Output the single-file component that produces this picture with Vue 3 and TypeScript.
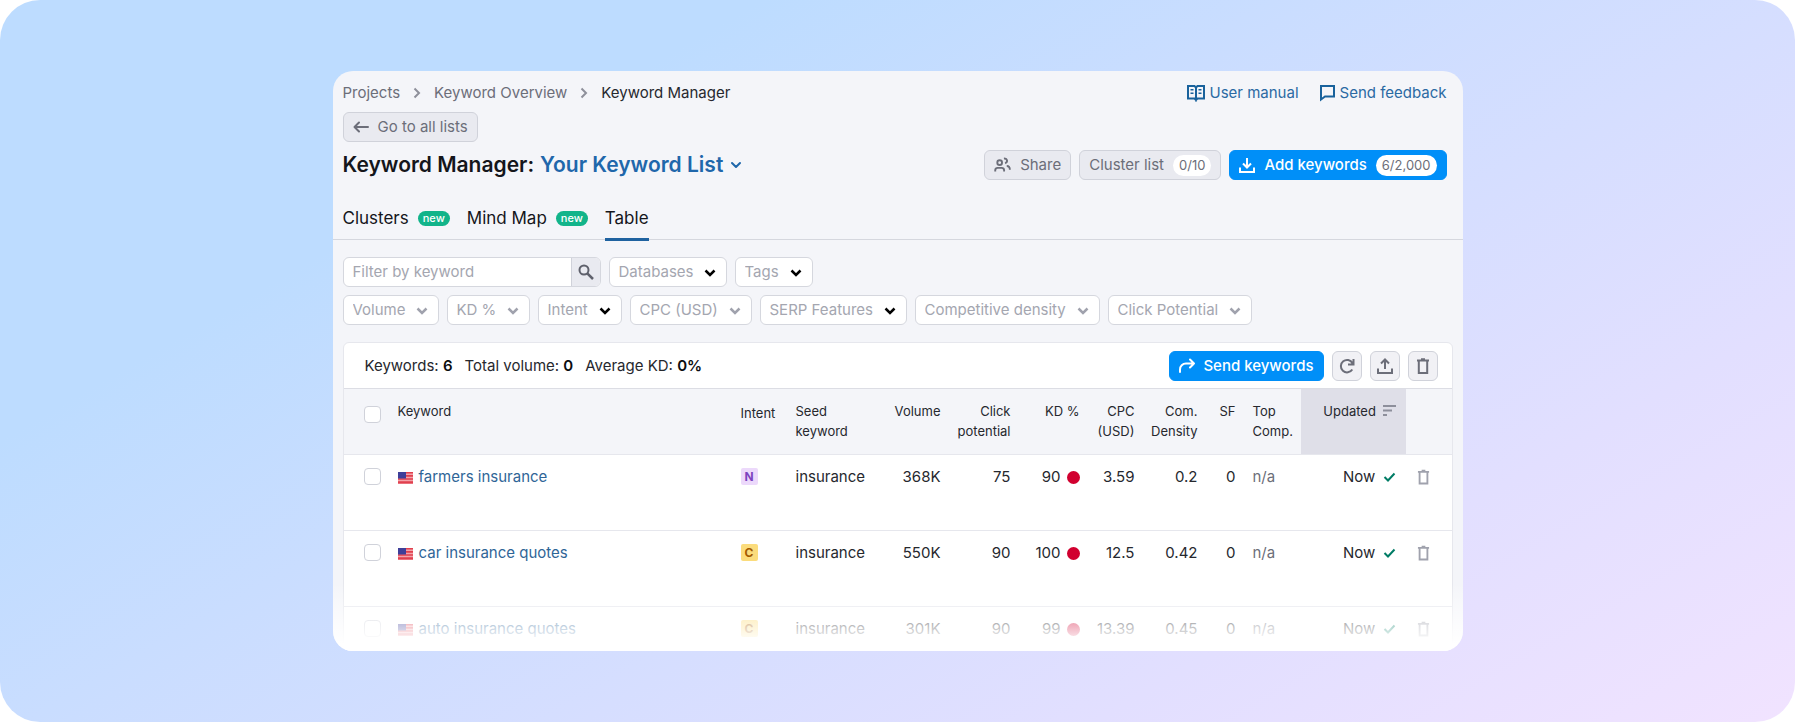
<script setup lang="ts">
interface Filter { label: string; strong: boolean }
interface Row {
  keyword: string; intent: 'N' | 'C'; seed: string; volume: string; click: string
  kd: string; cpc: string; density: string; sf: string; comp: string
}

const primaryFilters: Filter[] = [
  { label: 'Databases', strong: true },
  { label: 'Tags', strong: true },
]
const metricFilters: Filter[] = [
  { label: 'Volume', strong: false },
  { label: 'KD %', strong: false },
  { label: 'Intent', strong: true },
  { label: 'CPC (USD)', strong: false },
  { label: 'SERP Features', strong: true },
  { label: 'Competitive density', strong: false },
  { label: 'Click Potential', strong: false },
]
const rows: Row[] = [
  { keyword: 'farmers insurance', intent: 'N', seed: 'insurance', volume: '368K', click: '75', kd: '90', cpc: '3.59', density: '0.2', sf: '0', comp: 'n/a' },
  { keyword: 'car insurance quotes', intent: 'C', seed: 'insurance', volume: '550K', click: '90', kd: '100', cpc: '12.5', density: '0.42', sf: '0', comp: 'n/a' },
  { keyword: 'auto insurance quotes', intent: 'C', seed: 'insurance', volume: '301K', click: '90', kd: '99', cpc: '13.39', density: '0.45', sf: '0', comp: 'n/a' },
]
</script>

<template>
  <div class="stage">
    <main class="card">
      <div class="top">
        <nav class="crumbs" aria-label="Breadcrumb">
          <a href="#">Projects</a>
          <svg width="8" height="12" viewBox="0 0 8 12"><path d="M1.500 1.500 6 6l-4.500 4.500" /></svg>
          <a href="#">Keyword Overview</a>
          <svg width="8" height="12" viewBox="0 0 8 12"><path d="M1.500 1.500 6 6l-4.500 4.500" /></svg>
          <span class="current">Keyword Manager</span>
        </nav>
        <div class="help">
          <a href="#">
            <svg width="18" height="18" viewBox="0 0 18 18" fill="none" stroke="currentColor" stroke-width="2">
              <path d="M1 2h6.500L9 3.500 10.500 2H17v12.500h-6.500L9 16l-1.500-1.500H1zM9 3.500V17.500" />
              <path d="M3.500 5.800h3M3.500 9.300h3M11.500 5.800h3M11.500 9.300h3" stroke-width="1.500" />
            </svg>
            User manual
          </a>
          <a href="#">
            <svg width="17" height="18" viewBox="0 0 17 18" fill="none" stroke="currentColor" stroke-width="2">
              <path d="M2 2h13v10.500H6L2 15.500z" />
            </svg>
            Send feedback
          </a>
        </div>
      </div>

      <button class="btn back" type="button">
        <svg width="16" height="14" viewBox="0 0 16 14" fill="none" stroke="currentColor" stroke-width="2" stroke-linecap="round" stroke-linejoin="round">
          <path d="M15 7H1.500M6 2.500 1.500 7 6 11.500" />
        </svg>
        Go to all lists
      </button>

      <header class="head">
        <h1>
          Keyword Manager:
          <button class="list-name" type="button">
            Your Keyword List
            <svg width="12" height="8" viewBox="0 0 12 8" fill="none" stroke="currentColor" stroke-width="2" stroke-linecap="round" stroke-linejoin="round"><path d="M2 2l4 4 4-4" /></svg>
          </button>
        </h1>
        <div class="actions">
          <button class="btn" type="button">
            <svg width="17" height="16" viewBox="0 0 18 16" fill="none" stroke="currentColor" stroke-width="2">
              <circle cx="6" cy="5.500" r="2.500" />
              <path d="M1.300 15v-1.500a2.500 2.500 0 0 1 2.500-2.500h4.400a2.500 2.500 0 0 1 2.500 2.500V15M10.500 1.200c3.800-.4 4.500 3.600 1.300 5M13.500 9c2.500 0 3.300 1.200 3.300 4" />
            </svg>
            Share
          </button>
          <button class="btn" type="button">Cluster list <span class="count">0/10</span></button>
          <button class="btn primary" type="button">
            <svg width="16" height="16" viewBox="0 0 16 16" fill="none" stroke="currentColor" stroke-width="2">
              <path d="M8 1v9M4 6.500l4 4 4-4M1 10.500V15h14v-4.500" />
            </svg>
            Add keywords <span class="count">6/2,000</span>
          </button>
        </div>
      </header>

      <nav class="tabs" aria-label="Views">
        <a href="#">Clusters <span class="new">new</span></a>
        <a href="#">Mind Map <span class="new">new</span></a>
        <a href="#" class="active" aria-current="page">Table</a>
      </nav>

      <section class="filters" aria-label="Filters">
        <div class="line">
          <form class="search" @submit.prevent>
            <input type="text" placeholder="Filter by keyword" aria-label="Filter by keyword">
            <button type="submit" aria-label="Search">
              <svg width="16" height="16" viewBox="0 0 16 16" fill="none" stroke="currentColor" stroke-width="2">
                <circle cx="6" cy="6" r="4.500" /><path d="M9.300 9.300l5.700 5.700" stroke-width="2.500" />
              </svg>
            </button>
          </form>
          <div v-for="f in primaryFilters" :key="f.label" class="pick" :class="{ strong: f.strong }">
            <select :aria-label="f.label"><option>{{ f.label }}</option></select>
            <svg width="12" height="9" viewBox="0 0 12 9"><path d="M1.500 1.500 6 6l4.500-4.500" /></svg>
          </div>
        </div>
        <div class="line">
          <div v-for="f in metricFilters" :key="f.label" class="pick" :class="{ strong: f.strong }">
            <select :aria-label="f.label"><option>{{ f.label }}</option></select>
            <svg width="12" height="9" viewBox="0 0 12 9"><path d="M1.500 1.500 6 6l4.500-4.500" /></svg>
          </div>
        </div>
      </section>

      <section class="panel">
        <div class="summary">
          <div class="totals">
            <span>Keywords: <b>6</b></span>
            <span>Total volume: <b>0</b></span>
            <span>Average KD: <b>0%</b></span>
          </div>
          <div class="actions">
            <button class="btn primary send" type="button">
              <svg width="16" height="16" viewBox="0 0 16 16" fill="none" stroke="currentColor" stroke-width="2" stroke-linecap="round" stroke-linejoin="round">
                <path d="M1 14v-2.500a6 6 0 0 1 6-6h8M11 1.500l4 4-4 4" />
              </svg>
              Send keywords
            </button>
            <button class="btn icon" type="button" aria-label="Refresh">
              <svg width="16" height="16" viewBox="0 0 16 16" fill="none" stroke="currentColor" stroke-width="2">
                <path d="M13.300 11.500A6.200 6.200 0 1 1 13.500 5.200M14.500 1v5.500H9" />
              </svg>
            </button>
            <button class="btn icon" type="button" aria-label="Export">
              <svg width="16" height="16" viewBox="0 0 16 16" fill="none" stroke="currentColor" stroke-width="2">
                <path d="M8 11V2M4 5.500l4-4 4 4M1 10.500V15h14v-4.500" />
              </svg>
            </button>
            <button class="btn icon" type="button" aria-label="Delete">
              <svg width="14" height="16" viewBox="0 0 14 16" fill="none" stroke="currentColor" stroke-width="2">
                <path d="M1 2.500h12M5 1.200h4M2.800 3v12h8.400V3" />
              </svg>
            </button>
          </div>
        </div>

        <table>
          <colgroup>
            <col class="w-check"><col><col class="w-intent"><col class="w-seed"><col class="w-volume">
            <col class="w-click"><col class="w-kd"><col class="w-cpc"><col class="w-density"><col class="w-sf">
            <col class="w-comp"><col class="w-updated"><col class="w-del">
          </colgroup>
          <thead>
            <tr>
              <th class="check"><input type="checkbox" aria-label="Select all keywords"></th>
              <th>Keyword</th>
              <th class="intent">Intent</th>
              <th>Seed<br>keyword</th>
              <th class="num">Volume</th>
              <th class="num">Click<br>potential</th>
              <th class="num">KD %</th>
              <th class="num">CPC<br>(USD)</th>
              <th class="num">Com.<br>Density</th>
              <th class="num">SF</th>
              <th class="comp">Top<br>Comp.</th>
              <th class="updated sorted" aria-sort="descending">
                Updated
                <svg width="13" height="11" viewBox="0 0 13 11" fill="none" stroke="#8d8f9b" stroke-width="2"><path d="M0 1h13M0 5.500h9M0 10h4" /></svg>
              </th>
              <th></th>
            </tr>
          </thead>
          <tbody>
            <tr v-for="r in rows" :key="r.keyword">
              <td class="check"><input type="checkbox" :aria-label="'Select ' + r.keyword"></td>
              <td>
                <a class="kw" href="#">
                  <svg width="15" height="12" viewBox="0 0 15 12">
                    <path fill="#f4a3aa" d="M0 0h15v12H0z" />
                    <path fill="#e0404e" d="M0 0h15v1.500H0zM0 3h15v1.700H0zM0 6.200h15v1.600H0zM0 9.300h15v1.700H0zM0 11.500h15v.5H0z" />
                    <path fill="#3f3f99" d="M0 0h8v6.500H0z" />
                  </svg>
                  {{ r.keyword }}
                </a>
              </td>
              <td><span class="badge" :class="r.intent">{{ r.intent }}</span></td>
              <td>{{ r.seed }}</td>
              <td class="num">{{ r.volume }}</td>
              <td class="num">{{ r.click }}</td>
              <td class="num"><span class="kd">{{ r.kd }}<i class="dot"></i></span></td>
              <td class="num">{{ r.cpc }}</td>
              <td class="num">{{ r.density }}</td>
              <td class="num">{{ r.sf }}</td>
              <td class="comp muted">{{ r.comp }}</td>
              <td class="updated">
                Now
                <svg width="13" height="10" viewBox="0 0 13 10" fill="none" stroke="#007c65" stroke-width="2"><path d="M1.500 5l3.500 3.500 6.500-7" /></svg>
              </td>
              <td class="del">
                <button type="button" :aria-label="'Delete ' + r.keyword">
                  <svg width="13" height="16" viewBox="0 0 14 16" fill="none" stroke="currentColor" stroke-width="2">
                    <path d="M1 2.500h12M5 1.200h4M2.800 3v12h8.400V3" />
                  </svg>
                </button>
              </td>
            </tr>
          </tbody>
        </table>
      </section>
      <div class="fade"></div>
    </main>
  </div>
</template>

<style>
body { background: #fff; }
</style>

<style scoped>
.stage, .stage * { box-sizing: border-box; }
.stage {
  height: 100vh;
  padding: 71px 40px;
  display: flex;
  justify-content: center;
  border-radius: 40px;
  background: linear-gradient(150deg, #bddcff 25%, #e2dfff 77%, #f1e3ff 100%);
  font: 15px/20px Inter, "Liberation Sans", sans-serif;
  color: #26282e;
}
.card {
  position: relative;
  width: 100%;
  max-width: 1130px;
  overflow: hidden;
  border-radius: 20px;
  background: #f4f5f9;
}
svg { flex: none; }
a { color: inherit; text-decoration: none; }
button, input, select { font: inherit; color: inherit; margin: 0; }
button { cursor: pointer; }

.top { display: flex; justify-content: space-between; padding: 12px 16px 0 10px; }
.crumbs { display: flex; align-items: center; gap: 13px; color: #6c6e79; }
.crumbs svg { fill: none; stroke: #8e909b; stroke-width: 2; }
.crumbs .current { color: #26282e; }
.help { display: flex; gap: 20px; color: #2b6aa3; }
.help a { display: flex; align-items: center; gap: 4px; }
.help svg { color: #19629c; }

.btn {
  display: inline-flex;
  align-items: center;
  gap: 9px;
  height: 30px;
  padding: 0 9px;
  border: 1px solid #d0d2da;
  border-radius: 6px;
  background: #e9eaf0;
  color: #6c6e79;
}
.back { margin: 9px 0 0 10px; }
.primary { border-color: #008ff8; background: #008ff8; color: #fff; font-weight: 500; }
.send { gap: 8px; }
.count {
  padding: 0 6px;
  border-radius: 11px;
  background: #fff;
  color: #6c6e79;
  font-size: 13px;
  font-weight: 400;
  line-height: 21px;
}
.icon { width: 30px; padding: 0; justify-content: center; background: #f1f1f5; }

.head { display: flex; justify-content: space-between; align-items: center; padding: 8px 16px 0 10px; }
h1 { display: flex; align-items: center; gap: 6px; margin: 0; font-size: 21px; line-height: 28px; font-weight: 600; color: #14161b; }
.list-name { display: inline-flex; align-items: center; gap: 7px; padding: 0; border: 0; background: none; color: #1f67ab; }
.actions { display: flex; gap: 8px; }

.tabs { display: flex; gap: 17px; margin-top: 19px; padding: 0 10px; border-bottom: 1px solid #d5d7de; font-size: 17px; line-height: 24px; color: #14161b; }
.tabs a { display: flex; align-items: center; gap: 9px; height: 39px; padding-bottom: 1px; }
.tabs .active { height: 42px; margin-bottom: -2px; border-bottom: 3px solid #1f62a0; }
.new { padding: 0 5px; border-radius: 8px; background: #12b48a; color: #fff; font-size: 11px; line-height: 15px; font-weight: 500; }

.filters { display: grid; gap: 8px; padding: 17px 10px 0; color: #a4a6b0; }
.line { display: flex; gap: 8px; }
.search { display: flex; width: 258px; height: 30px; border: 1px solid #d5d7de; border-radius: 6px; background: #fff; overflow: hidden; }
.search input { flex: 1; min-width: 0; padding: 0 9px; border: 0; background: none; }
.search input::placeholder { color: #a4a6b0; opacity: 1; }
.search button { display: grid; place-items: center; width: 29px; padding: 0; border: 0; border-left: 1px solid #d0d2da; background: #e9eaf0; color: #5f616c; }
.pick { position: relative; }
.pick select { display: block; appearance: none; height: 30px; padding: 0 32px 0 9px; border: 1px solid #d5d7de; border-radius: 6px; background: #fff; }
.pick svg { position: absolute; right: 11px; top: 12px; fill: none; stroke: #a0a2ad; stroke-width: 2.5; pointer-events: none; }
.pick.strong svg { stroke: #000; }

.panel { margin: 17px 10px 0; border: 1px solid #e6e7ed; border-radius: 6px 6px 0 0; background: #fff; }
.summary { display: flex; justify-content: space-between; align-items: center; padding: 8px 14px 7px 21px; }
.totals { display: flex; gap: 12px; }
b { font-weight: 600; color: #0c0d10; }

table { width: 100%; table-layout: fixed; border-collapse: separate; border-spacing: 0; }
.w-check { width: 54px; }
.w-intent { width: 55px; }
.w-seed { width: 84px; }
.w-volume { width: 61px; }
.w-click { width: 70px; }
.w-kd { width: 69px; }
.w-cpc { width: 55px; }
.w-density { width: 63px; }
.w-sf { width: 38px; }
.w-comp { width: 65px; }
.w-updated { width: 105px; }
.w-del { width: 46px; }
th, td { padding: 0; text-align: left; vertical-align: top; white-space: nowrap; }
th { height: 67px; padding-top: 12px; border-top: 1px solid #dcdde4; border-bottom: 1px solid #e6e7ed; background: #f4f5f9; font-size: 13px; font-weight: 400; }
td { height: 76px; padding-top: 12px; border-bottom: 1px solid #e6e7ed; }
th.intent { padding-top: 14px; }
.num { text-align: right; }
.check { padding-left: 20px; }
.check input { display: block; appearance: none; width: 17px; height: 17px; border: 1px solid #d0d2da; border-radius: 4px; background: #fff; }
th.check { padding-top: 17px; }
td.check { padding-top: 13px; }
.comp { padding-left: 17px; }
.muted { color: #6c6e79; }
.updated { padding-right: 10px; text-align: right; }
.updated svg { margin-left: 3px; }
.sorted { background: #dfdfe8; }
.kw { display: flex; align-items: center; gap: 6px; color: #2f6597; }
.kw svg { margin-top: 2px; }
.badge { display: block; width: 17px; height: 17px; margin-top: 1px; border-radius: 2px; font-size: 12px; line-height: 17px; font-weight: 700; text-align: center; }
.badge.N { background: #ecd9fb; color: #7d43bf; }
.badge.C { background: #fbdc7c; color: #a35a00; }
.kd { display: inline-flex; align-items: center; gap: 6px; }
.dot { width: 13px; height: 13px; border-radius: 50%; background: #d1002f; }
.del button { display: block; margin: 2px auto 0 11px; padding: 0; border: 0; background: none; color: #a0a2ad; }
.fade {
  position: absolute;
  inset: auto 0 0;
  height: 68px;
  background: linear-gradient(#fff0, #fff 90%);
  pointer-events: none;
}
</style>
